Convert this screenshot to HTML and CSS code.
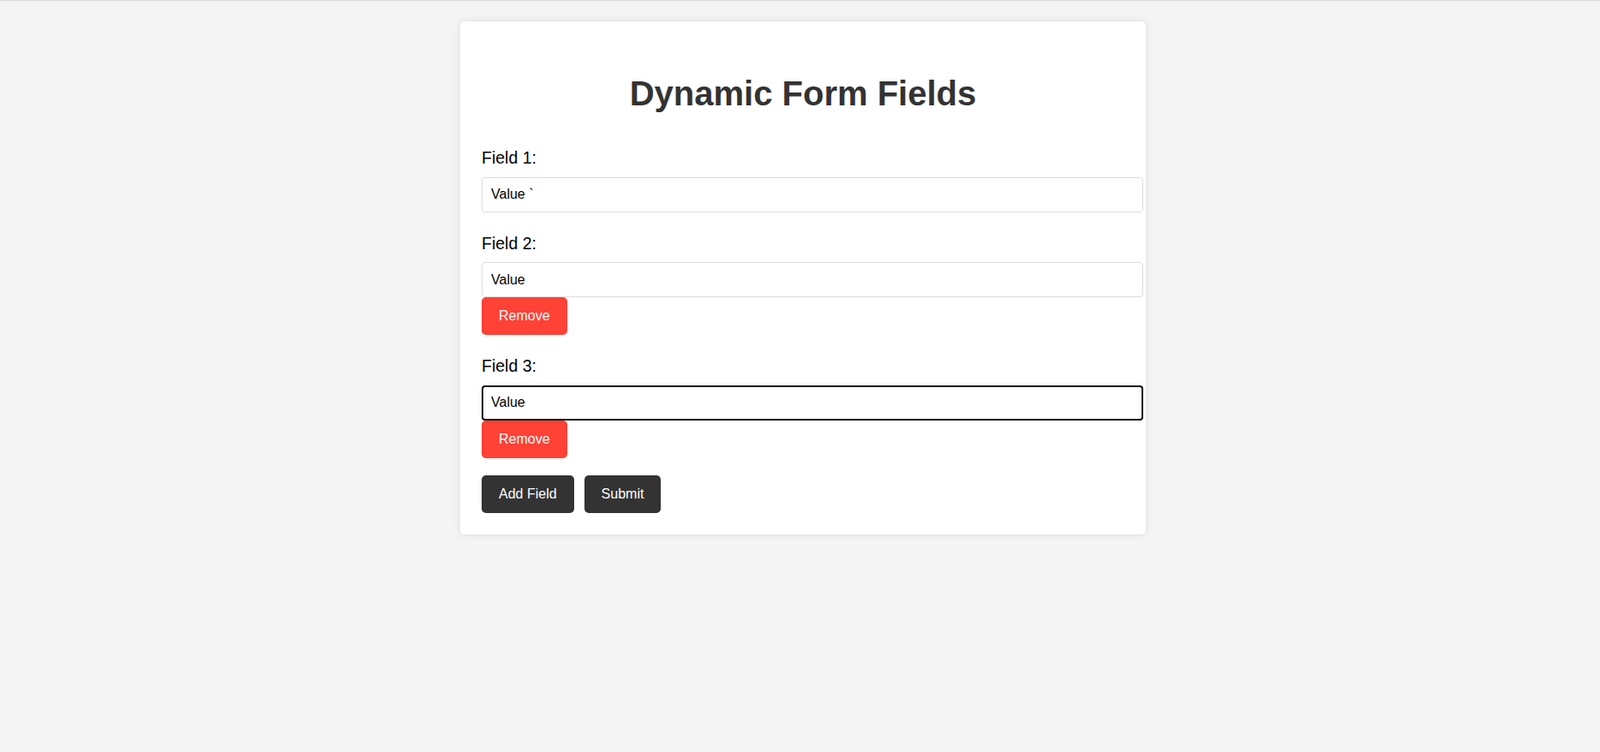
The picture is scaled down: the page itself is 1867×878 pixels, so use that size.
FILE: index.html
```html
<!DOCTYPE html>
<html lang="en">
<head>
<meta charset="utf-8">
<title>Dynamic Form Fields</title>
<link rel="stylesheet" href="styles.css">
</head>
<body>
  <div class="card">
    <h1 class="title">Dynamic Form Fields</h1>
    <form class="form">
      <div class="group">
        <label class="label" for="f1">Field 1:</label>
        <input class="input" id="f1" type="text" value="Value `">
      </div>
      <div class="group">
        <label class="label" for="f2">Field 2:</label>
        <input class="input" id="f2" type="text" value="Value">
        <button type="button" class="btn btn-remove">Remove</button>
      </div>
      <div class="group group-last">
        <label class="label" for="f3">Field 3:</label>
        <input class="input input-focus" id="f3" type="text" value="Value">
        <button type="button" class="btn btn-remove">Remove</button>
      </div>
      <div class="actions">
        <button type="button" class="btn btn-dark">Add Field</button>
        <button type="submit" class="btn btn-dark">Submit</button>
      </div>
    </form>
  </div>
</body>
</html>
```
FILE: styles.css
```css
html, body {
  margin: 0;
  padding: 0;
}
body {
  background: #f4f4f4;
  border-top: 1px solid #dadada;
  padding-left: 7px;
  font-family: "Liberation Sans", Arial, sans-serif;
  min-height: 877px;
  box-sizing: border-box;
}
.card {
  width: 750px;
  padding: 25px;
  margin: 24px auto 0;
  background: #ffffff;
  border-radius: 5px;
  box-shadow: 0 0 10px rgba(0, 0, 0, 0.1);
}
.title {
  margin: 36px 0 41px;
  font-size: 40px;
  line-height: 46px;
  font-weight: bold;
  color: #333333;
  text-align: center;
}
.form {
  margin: 0;
}
.group {
  margin-bottom: 25px;
}
.group-last {
  margin-bottom: 20px;
}
.label {
  display: block;
  font-size: 19.5px;
  line-height: 22px;
  color: #000000;
  margin-bottom: 11.5px;
}
.input {
  display: block;
  padding: 10px;
  font-family: "Liberation Sans", Arial, sans-serif;
  font-size: 16px;
  line-height: 19px;
  height: 41px;
  box-sizing: border-box;
  width: 772px;
  color: #000000;
  border: 1px solid #dddddd;
  border-radius: 4px;
  background: #ffffff;
  margin: 0;
}
.input-focus {
  outline: 2px solid #101010;
  outline-offset: -2px;
}
.btn {
  display: inline-block;
  padding: 13px 20px;
  font-family: "Liberation Sans", Arial, sans-serif;
  font-size: 16px;
  line-height: 18px;
  color: #ffffff;
  border: none;
  border-radius: 5px;
  cursor: pointer;
  margin: 0;
}
.btn-remove {
  background: #ff4136;
}
.btn-dark {
  background: #333333;
}
.actions {
  display: flex;
  gap: 12px;
}
```
